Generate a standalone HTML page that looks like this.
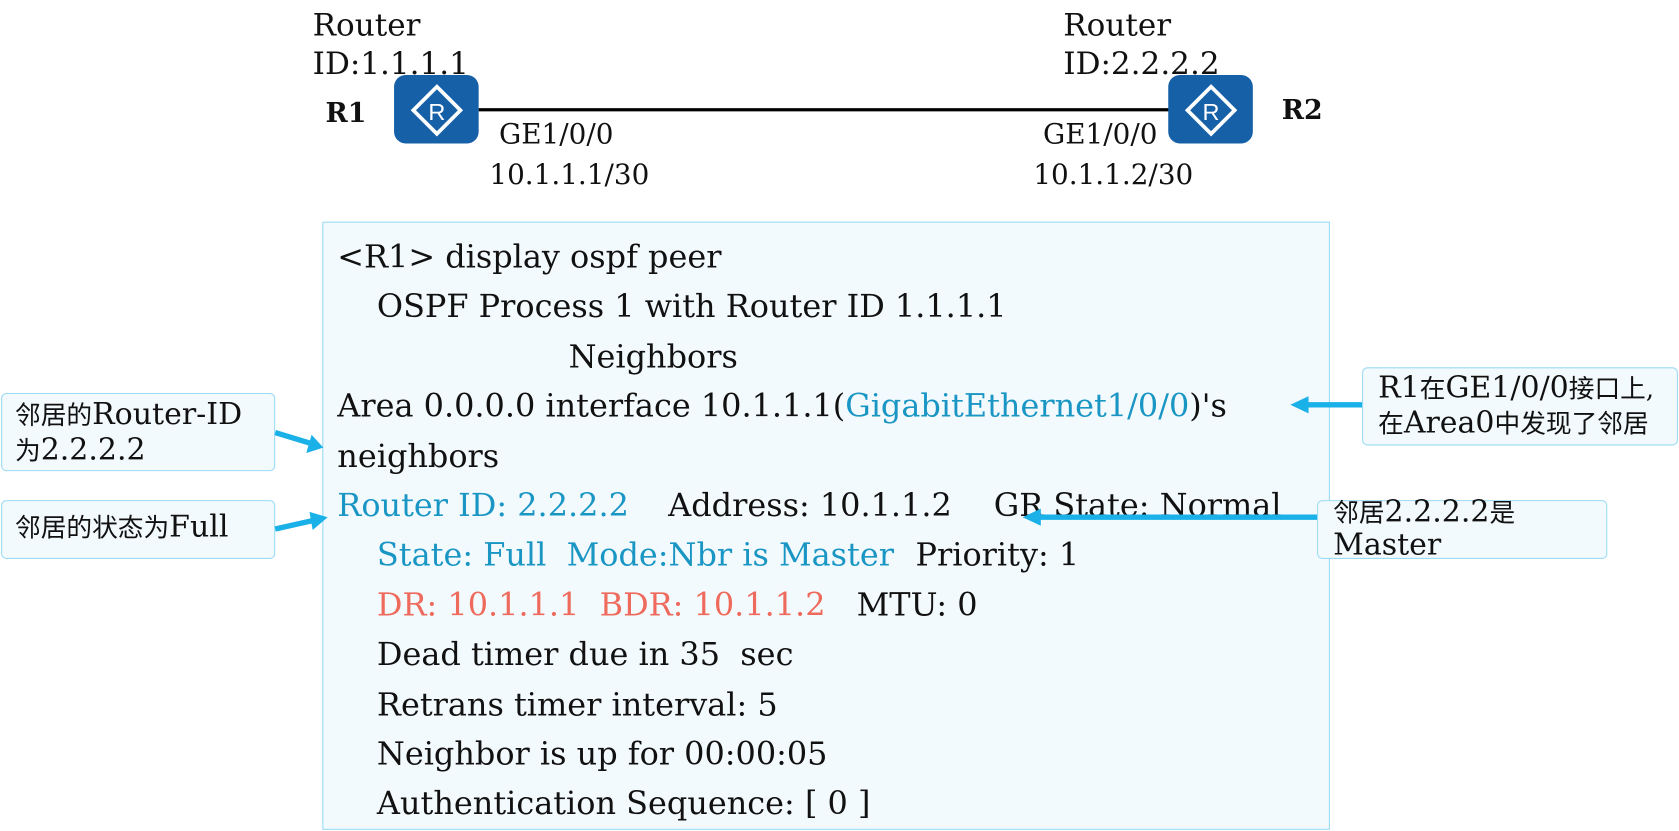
<!DOCTYPE html>
<html><head><meta charset="utf-8"><style>
html,body{margin:0;padding:0;background:#fff;width:1679px;height:831px;overflow:hidden}
#w{position:absolute;left:0;top:0;width:1568px;height:776px;transform:scale(1.0708);transform-origin:0 0;font-family:"DejaVu Serif","Liberation Serif","Noto Sans CJK SC",serif;color:#111}
.t{position:absolute;white-space:pre;line-height:1}
.l{position:absolute;white-space:pre;font-size:29.8px;line-height:46.4px}
.b{color:#1a96c4}.r{color:#ee6a5c}
.box{position:absolute;border:1.5px solid #9adcf4;background:#f3fafd;border-radius:5px;box-sizing:border-box}
.cj{font-family:"DejaVu Serif","Liberation Serif","Noto Sans CJK SC",serif;font-size:24px;line-height:1}
.cj span{font-size:28px}
.ic{position:absolute;width:79px;height:64px;background:#1660a8;border-radius:11px}
</style></head><body><div id="w">
<div class="t" style="left:292px;top:9px;font-size:29px">Router</div>
<div class="t" style="left:292px;top:45px;font-size:29px">ID:1.1.1.1</div>
<div class="t" style="left:993px;top:9px;font-size:29px">Router</div>
<div class="t" style="left:993px;top:45px;font-size:29px">ID:2.2.2.2</div>
<div style="position:absolute;left:447px;top:101px;width:645px;height:3px;background:#000"></div>
<div class="ic" style="left:368px;top:70px"><svg width="79" height="64" viewBox="0 0 79 64"><path d="M40 11 L62 33 L40 55 L18 33 Z" fill="none" stroke="#fff" stroke-width="3.5"/><text x="40" y="42" font-family="Liberation Sans,sans-serif" font-size="22" fill="#fff" text-anchor="middle">R</text></svg></div>
<div class="ic" style="left:1091px;top:70px"><svg width="79" height="64" viewBox="0 0 79 64"><path d="M40 11 L62 33 L40 55 L18 33 Z" fill="none" stroke="#fff" stroke-width="3.5"/><text x="40" y="42" font-family="Liberation Sans,sans-serif" font-size="22" fill="#fff" text-anchor="middle">R</text></svg></div>
<div class="t" style="left:304px;top:93px;font-size:25px;font-weight:bold">R1</div>
<div class="t" style="left:1197px;top:90px;font-size:25px;font-weight:bold">R2</div>
<div class="t" style="left:466px;top:113px;font-size:26px">GE1/0/0</div>
<div class="t" style="left:457px;top:151px;font-size:26px">10.1.1.1/30</div>
<div class="t" style="left:974px;top:113px;font-size:26px">GE1/0/0</div>
<div class="t" style="left:965px;top:151px;font-size:26px">10.1.1.2/30</div>

<div style="position:absolute;left:301px;top:207px;width:941px;height:568px;border:1.5px solid #9adcf4;background:#f3fafd;box-sizing:border-box"></div>
<div class="l" style="left:315px;top:218px">&lt;R1&gt; display ospf peer</div>
<div class="l" style="left:352px;top:264.4px">OSPF Process 1 with Router ID 1.1.1.1</div>
<div class="l" style="left:531px;top:310.8px">Neighbors</div>
<div class="l" style="left:315px;top:357.2px">Area 0.0.0.0 interface 10.1.1.1(<span class="b">GigabitEthernet1/0/0</span>)'s</div>
<div class="l" style="left:315px;top:403.6px">neighbors</div>
<div class="l b" style="left:315px;top:450px">Router ID: 2.2.2.2</div>
<div class="l" style="left:624px;top:450px">Address: 10.1.1.2</div>
<div class="l" style="left:928px;top:450px">GR State: Normal</div>
<div class="l b" style="left:352px;top:496.4px">State: Full  Mode:Nbr is Master</div>
<div class="l" style="left:855px;top:496.4px">Priority: 1</div>
<div class="l r" style="left:352px;top:542.8px">DR: 10.1.1.1  BDR: 10.1.1.2</div>
<div class="l" style="left:800px;top:542.8px">MTU: 0</div>
<div class="l" style="left:352px;top:589.2px">Dead timer due in 35  sec</div>
<div class="l" style="left:352px;top:635.6px">Retrans timer interval: 5</div>
<div class="l" style="left:352px;top:682px">Neighbor is up for 00:00:05</div>
<div class="l" style="left:352px;top:728.4px">Authentication Sequence: [ 0 ]</div>

<div class="box" style="left:1px;top:367px;width:256px;height:73px"></div>
<div class="t cj" style="left:14px;top:371px;line-height:32px">邻居的<span>Router-ID</span>
为<span>2.2.2.2</span></div>
<div class="box" style="left:1px;top:467px;width:256px;height:55px"></div>
<div class="t cj" style="left:14px;top:478px">邻居的状态为<span>Full</span></div>
<div class="box" style="left:1272px;top:343px;width:295px;height:73px"></div>
<div class="t cj" style="left:1287px;top:346px;line-height:31px"><span>R1</span>在<span>GE1/0/0</span>接口上,
在<span>Area0</span>中发现了邻居</div>
<div class="box" style="left:1230px;top:467px;width:271px;height:55px"></div>
<div class="t cj" style="left:1245px;top:463px;line-height:29px">邻居<span>2.2.2.2</span>是
<span>Master</span></div>

<svg style="position:absolute;left:0;top:0" width="1568" height="776">
<g stroke="#1ab0e8" stroke-width="5" fill="#1ab0e8">
<line x1="257" y1="404" x2="290" y2="414"/><path d="M302 418 L286 423 L291 406 Z" stroke="none"/>
<line x1="257" y1="494" x2="293" y2="486"/><path d="M306 483 L292 495 L289 478 Z" stroke="none"/>
<line x1="1272" y1="378" x2="1218" y2="378"/><path d="M1205 378 L1222 370 L1222 386 Z" stroke="none"/>
<line x1="1230" y1="483" x2="968" y2="483"/><path d="M955 483 L972 475 L972 491 Z" stroke="none"/>
</g></svg>
</div></body></html>
